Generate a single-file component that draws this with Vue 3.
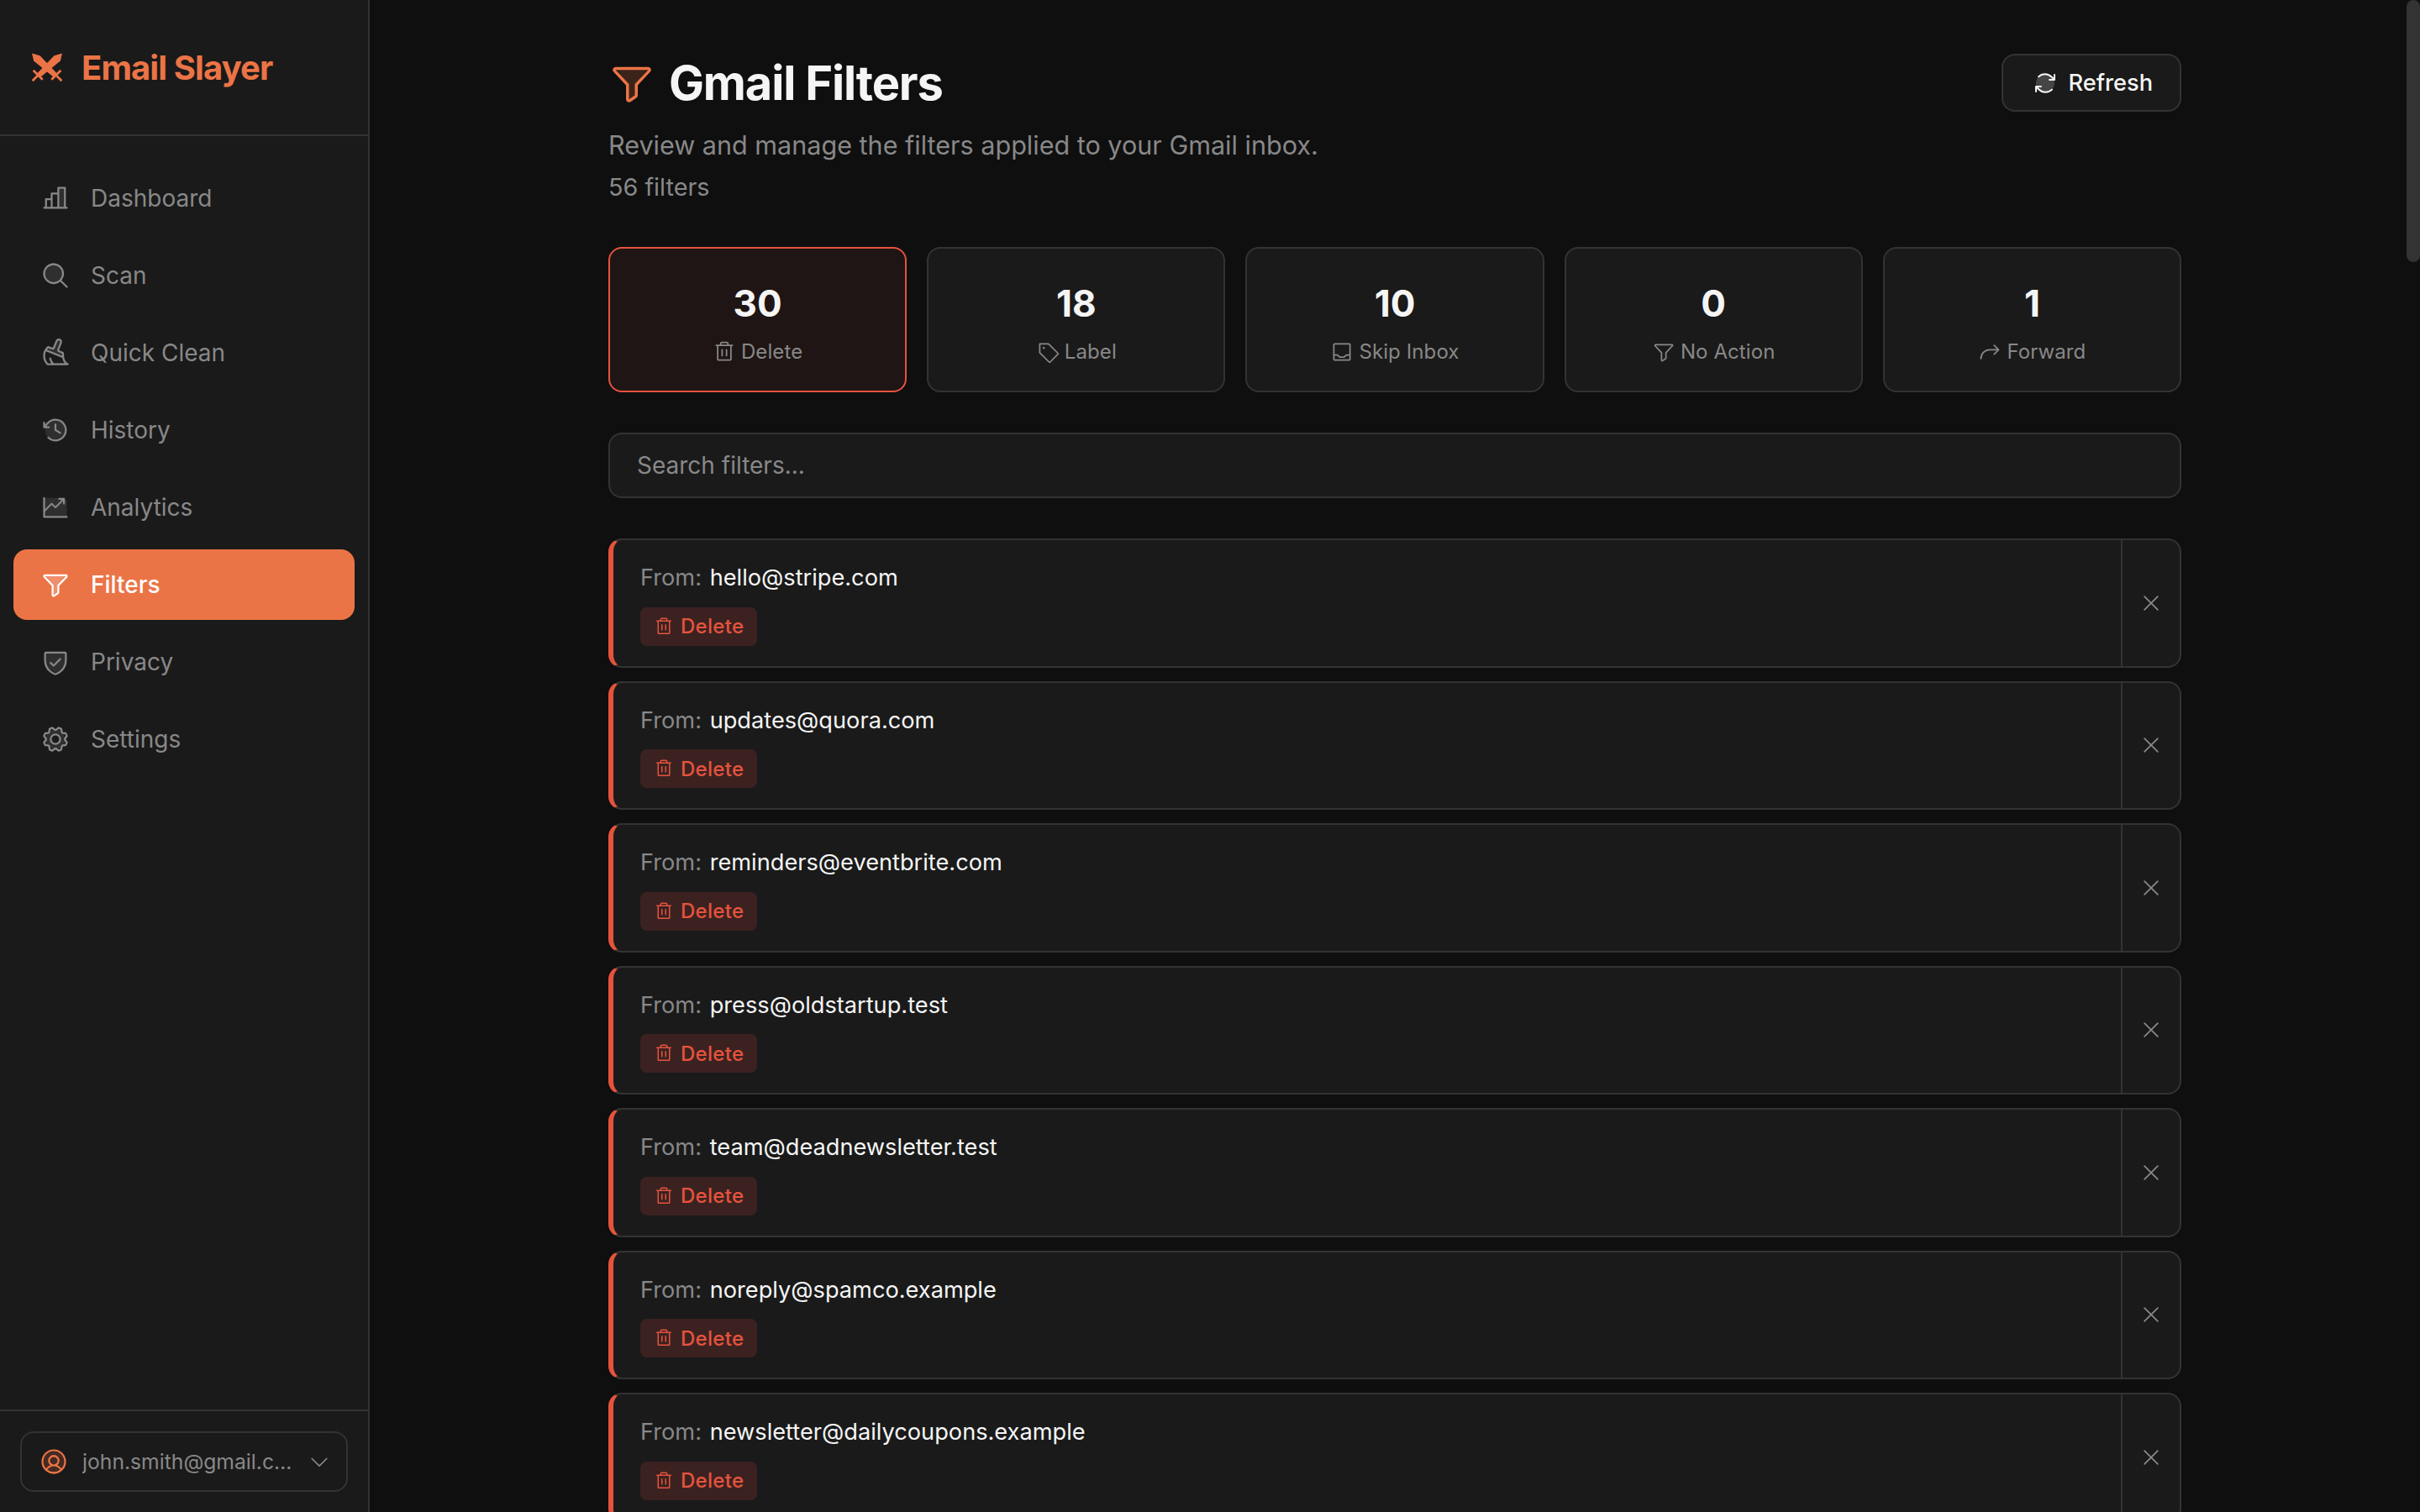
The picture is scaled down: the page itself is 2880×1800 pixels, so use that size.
<script setup>
const P = {
  chart: 'M224,200h-8V40a8,8,0,0,0-8-8H152a8,8,0,0,0-8,8V80H96a8,8,0,0,0-8,8v40H48a8,8,0,0,0-8,8v64H32a8,8,0,0,0,0,16H224a8,8,0,0,0,0-16ZM160,48h40V200H160ZM104,96h40V200H104ZM56,144H88v56H56Z',
  search: 'M229.66,218.34l-50.07-50.06a88.11,88.11,0,1,0-11.31,11.31l50.06,50.07a8,8,0,0,0,11.32-11.32ZM40,112a72,72,0,1,1,72,72A72.08,72.08,0,0,1,40,112Z',
  broom: 'M235.5,216.81c-22.56-11-35.5-34.58-35.5-64.8V134.73a15.94,15.94,0,0,0-10.09-14.87L165,110a8,8,0,0,1-4.48-10.34l21.32-53a28,28,0,0,0-16.1-37,28.14,28.14,0,0,0-35.82,16,.61.61,0,0,0,0,.12L108.9,79a8,8,0,0,1-10.37,4.49L73.11,73.14A15.89,15.89,0,0,0,55.74,76.8C34.68,98.45,24,123.75,24,152a111.45,111.45,0,0,0,31.18,77.53A8,8,0,0,0,61,232H232a8,8,0,0,0,3.5-15.19ZM67.14,88l25.41,10.3a24,24,0,0,0,31.23-13.45l21-53c2.56-6.11,9.47-9.27,15.43-7a12,12,0,0,1,6.88,15.92L145.69,93.76a24,24,0,0,0,13.43,31.14L184,134.73V152c0,.33,0,.66,0,1L55.77,101.71A108.84,108.84,0,0,1,67.14,88Zm48,128a87.53,87.53,0,0,1-24.34-42,8,8,0,0,0-15.49,4,105.16,105.16,0,0,0,18.36,38H64.44A95.54,95.54,0,0,1,40,152a85.9,85.9,0,0,1,7.73-36.29l137.8,55.12c3,18,10.56,33.48,21.89,45.16Z',
  history: 'M136,80v43.47l36.12,21.67a8,8,0,0,1-8.24,13.72l-40-24A8,8,0,0,1,120,128V80a8,8,0,0,1,16,0Zm-8-48A95.44,95.44,0,0,0,60.08,60.15C52.81,67.51,46.35,74.59,40,82V64a8,8,0,0,0-16,0v40a8,8,0,0,0,8,8H72a8,8,0,0,0,0-16H49c7.15-8.42,14.27-16.35,22.39-24.57a80,80,0,1,1,1.66,114.75,8,8,0,1,0-11,11.64A96,96,0,1,0,128,32Z',
  trend: 'M232,208a8,8,0,0,1-8,8H32a8,8,0,0,1-8-8V48a8,8,0,0,1,16,0v94.37L90.34,92a8,8,0,0,1,11.32,0L128,118.34,180.69,64H160a8,8,0,0,1,0-16h40a8,8,0,0,1,8,8V96a8,8,0,0,1-16,0V75.31L133.66,133.66a8,8,0,0,1-11.32,0L96,107.31l-56,56V200H224A8,8,0,0,1,232,208Z',
  funnel: 'M230.6,49.53A15.81,15.81,0,0,0,216,40H40A16,16,0,0,0,28.19,66.76l.08.09L96,139.17V216a16,16,0,0,0,24.87,13.32l32-21.34A16,16,0,0,0,160,194.66V139.17l67.74-72.32.08-.09A15.8,15.8,0,0,0,230.6,49.53ZM40,56h0Zm106.18,74.58A8,8,0,0,0,144,136v58.66L112,216V136a8,8,0,0,0-2.16-5.47L40,56H216Z',
  shield: 'M208,40H48A16,16,0,0,0,32,56v56c0,52.72,25.52,84.67,46.93,102.19,23.06,18.86,46,25.27,47,25.53a8,8,0,0,0,4.2,0c1-.26,23.91-6.67,47-25.53C198.48,196.67,224,164.72,224,112V56A16,16,0,0,0,208,40Zm0,72c0,37.07-13.66,67.16-40.6,89.42A129.3,129.3,0,0,1,128,223.62a128.25,128.25,0,0,1-38.92-21.81C61.82,179.51,48,149.3,48,112l0-56,160,0ZM82.34,141.66a8,8,0,0,1,11.32-11.32L112,148.69l50.34-50.35a8,8,0,0,1,11.32,11.32l-56,56a8,8,0,0,1-11.32,0Z',
  gear: 'M128,80a48,48,0,1,0,48,48A48.05,48.05,0,0,0,128,80Zm0,80a32,32,0,1,1,32-32A32,32,0,0,1,128,160Zm88-29.84q.06-2.16,0-4.32l14.92-18.64a8,8,0,0,0,1.48-7.06,107.21,107.21,0,0,0-10.88-26.25,8,8,0,0,0-6-3.93l-23.72-2.64q-1.48-1.56-3-3L186,40.54a8,8,0,0,0-3.94-6,107.71,107.71,0,0,0-26.25-10.87,8,8,0,0,0-7.06,1.49L130.16,40Q128,40,125.84,40L107.2,25.11a8,8,0,0,0-7.06-1.48A107.6,107.6,0,0,0,73.89,34.51a8,8,0,0,0-3.93,6L67.32,64.27q-1.56,1.49-3,3L40.54,70a8,8,0,0,0-6,3.94,107.71,107.71,0,0,0-10.87,26.25,8,8,0,0,0,1.49,7.06L40,125.84Q40,128,40,130.16L25.11,148.8a8,8,0,0,0-1.48,7.06,107.21,107.21,0,0,0,10.88,26.25,8,8,0,0,0,6,3.93l23.72,2.64q1.49,1.56,3,3L70,215.46a8,8,0,0,0,3.94,6,107.71,107.71,0,0,0,26.25,10.87,8,8,0,0,0,7.06-1.49L125.84,216q2.16.06,4.32,0l18.64,14.92a8,8,0,0,0,7.06,1.48,107.21,107.21,0,0,0,26.25-10.88,8,8,0,0,0,3.93-6l2.64-23.72q1.56-1.48,3-3L215.46,186a8,8,0,0,0,6-3.94,107.71,107.71,0,0,0,10.87-26.25,8,8,0,0,0-1.49-7.06Zm-16.1-6.5a73.93,73.93,0,0,1,0,8.68,8,8,0,0,0,1.74,5.48l14.19,17.73a91.57,91.57,0,0,1-6.23,15L187,173.11a8,8,0,0,0-5.1,2.64,74.11,74.11,0,0,1-6.14,6.14,8,8,0,0,0-2.64,5.1l-2.51,22.58a91.32,91.32,0,0,1-15,6.23l-17.74-14.19a8,8,0,0,0-5-1.75h-.48a73.93,73.93,0,0,1-8.68,0,8,8,0,0,0-5.48,1.74L100.45,215.8a91.57,91.57,0,0,1-15-6.23L82.89,187a8,8,0,0,0-2.64-5.1,74.11,74.11,0,0,1-6.14-6.14,8,8,0,0,0-5.1-2.64L46.43,170.6a91.32,91.32,0,0,1-6.23-15l14.19-17.74a8,8,0,0,0,1.74-5.48,73.93,73.93,0,0,1,0-8.68,8,8,0,0,0-1.74-5.48L40.2,100.45a91.57,91.57,0,0,1,6.23-15L69,82.89a8,8,0,0,0,5.1-2.64,74.11,74.11,0,0,1,6.14-6.14A8,8,0,0,0,82.89,69L85.4,46.43a91.32,91.32,0,0,1,15-6.23l17.74,14.19a8,8,0,0,0,5.48,1.74,73.93,73.93,0,0,1,8.68,0,8,8,0,0,0,5.48-1.74L155.55,40.2a91.57,91.57,0,0,1,15,6.23L173.11,69a8,8,0,0,0,2.64,5.1,74.11,74.11,0,0,1,6.14,6.14,8,8,0,0,0,5.1,2.64l22.58,2.51a91.32,91.32,0,0,1,6.23,15l-14.19,17.74A8,8,0,0,0,199.87,123.66Z',
  user: 'M128,24A104,104,0,1,0,232,128,104.11,104.11,0,0,0,128,24ZM74.08,197.5a64,64,0,0,1,107.84,0,87.83,87.83,0,0,1-107.84,0ZM96,120a32,32,0,1,1,32,32A32,32,0,0,1,96,120Zm97.76,66.41a79.66,79.66,0,0,0-36.06-28.75,48,48,0,1,0-59.4,0,79.66,79.66,0,0,0-36.06,28.75,88,88,0,1,1,131.52,0Z',
  trash: 'M216,48H176V40a24,24,0,0,0-24-24H104A24,24,0,0,0,80,40v8H40a8,8,0,0,0,0,16h8V208a16,16,0,0,0,16,16H192a16,16,0,0,0,16-16V64h8a8,8,0,0,0,0-16ZM96,40a8,8,0,0,1,8-8h48a8,8,0,0,1,8,8v8H96Zm96,168H64V64H192ZM112,104v64a8,8,0,0,1-16,0V104a8,8,0,0,1,16,0Zm48,0v64a8,8,0,0,1-16,0V104a8,8,0,0,1,16,0Z',
  tag: 'M243.31,136,144,36.69A15.86,15.86,0,0,0,132.69,32H40a8,8,0,0,0-8,8v92.69A15.86,15.86,0,0,0,36.69,144L136,243.31a16,16,0,0,0,22.63,0l84.68-84.68a16,16,0,0,0,0-22.63Zm-96,96L48,132.69V48h84.69L232,147.31ZM96,84A12,12,0,1,1,84,72,12,12,0,0,1,96,84Z',
  tray: 'M208,32H48A16,16,0,0,0,32,48V208a16,16,0,0,0,16,16H208a16,16,0,0,0,16-16V48A16,16,0,0,0,208,32Zm0,16V152h-28.7A15.86,15.86,0,0,0,168,156.69L148.69,176H107.31L88,156.69A15.86,15.86,0,0,0,76.69,152H48V48Zm0,160H48V168H76.69L96,187.31A15.86,15.86,0,0,0,107.31,192h41.38A15.86,15.86,0,0,0,160,187.31L179.31,168H208v40Z',
  share: 'M229.66,109.66l-48,48a8,8,0,0,1-11.32-11.32L204.69,112H128a88.1,88.1,0,0,0-88,88,8,8,0,0,1-16,0A104.11,104.11,0,0,1,128,96h76.69L170.34,61.66a8,8,0,0,1,11.32-11.32l48,48A8,8,0,0,1,229.66,109.66Z',
  refresh: 'M224,48V96a8,8,0,0,1-8,8H168a8,8,0,0,1,0-16h28.69L182.06,73.37a79.56,79.56,0,0,0-56.13-23.43h-.45A79.52,79.52,0,0,0,69.59,72.71,8,8,0,0,1,58.41,61.27a96,96,0,0,1,135,.79L208,76.69V48a8,8,0,0,1,16,0ZM186.41,183.29a80,80,0,0,1-112.47-.66L59.31,168H88a8,8,0,0,0,0-16H40a8,8,0,0,0-8,8v48a8,8,0,0,0,16,0V179.31l14.63,14.63A95.43,95.43,0,0,0,130,222.06h.53a95.36,95.36,0,0,0,67.07-27.33,8,8,0,0,0-11.18-11.44Z',
  caret: 'M213.66,101.66l-80,80a8,8,0,0,1-11.32,0l-80-80A8,8,0,0,1,53.66,90.34L128,164.69l74.34-74.35a8,8,0,0,1,11.32,11.32Z',
  x: 'M205.66,194.34a8,8,0,0,1-11.32,11.32L128,139.31,61.66,205.66a8,8,0,0,1-11.32-11.32L116.69,128,50.34,61.66A8,8,0,0,1,61.66,50.34L128,116.69l66.34-66.35a8,8,0,0,1,11.32,11.32L139.31,128Z'
}
const F = {
  chart: 'M152,40h56V208H152Z',
  search: 'M192,112a80,80,0,1,1-80-80A80,80,0,0,1,192,112Z',
  broom: 'M192,152c0,7,.7,13.7,2,20L48,113.5C53,102,60,91,70,81L96,92a16,16,0,0,0,21-9l0,0,21-52A20,20,0,0,1,175,47L153,96a16,16,0,0,0,9,21l30,12Z',
  history: 'M216,128A88,88,0,1,1,128,40,88,88,0,0,1,216,128Z',
  trend: 'M224,64V208H32V48H200V64Z',
  funnel: 'M40,48H216L152,128V200L104,224V128Z',
  shield: 'M216,48V112c0,84-88,104-88,104S40,196,40,112V48Z',
  gear: 'M128,40l28,8,32,14,18,30,14,36-14,36-18,30-32,14-28,8-28-8-32-14L50,164,36,128,50,92,68,62,100,48Z M128,88a40,40,0,1,0,40,40A40,40,0,0,0,128,88Z',
  user: 'M128,32A96,96,0,1,1,32,128,96,96,0,0,1,128,32Z',
  refresh: 'M216,128a88,88,0,1,1-88-88A88,88,0,0,1,216,128Z'
}
const nav = [
  { label: 'Dashboard', icon: 'chart' },
  { label: 'Scan', icon: 'search' },
  { label: 'Quick Clean', icon: 'broom' },
  { label: 'History', icon: 'history' },
  { label: 'Analytics', icon: 'trend' },
  { label: 'Filters', icon: 'funnel', active: true },
  { label: 'Privacy', icon: 'shield' },
  { label: 'Settings', icon: 'gear' }
]
const stats = [
  { n: 30, label: 'Delete', icon: 'trash', active: true },
  { n: 18, label: 'Label', icon: 'tag' },
  { n: 10, label: 'Skip Inbox', icon: 'tray' },
  { n: 0, label: 'No Action', icon: 'funnel' },
  { n: 1, label: 'Forward', icon: 'share' }
]
const rows = [
  'hello@stripe.com',
  'updates@quora.com',
  'reminders@eventbrite.com',
  'press@oldstartup.test',
  'team@deadnewsletter.test',
  'noreply@spamco.example',
  'newsletter@dailycoupons.example'
]
</script>

<template>
  <div class="app">
    <aside class="side">
      <div class="brand">
        <svg class="logo" viewBox="0 0 36 33" fill="currentColor" stroke="currentColor">
          <path stroke="none" d="M35 .5 26 3 7 23 11 27 33 9Z" />
          <path stroke="none" d="M1 .5 10 3 29 23 25 27 3 9Z" />
          <path fill="none" stroke-width="2.6" d="M2.500 19.500 13 30M7 26 1.500 31.500" />
          <path fill="none" stroke-width="2.600" d="M33.500 19.500 23 30M29 26 34.500 31.500" />
        </svg>
        <span>Email Slayer</span>
      </div>
      <nav class="nav">
        <a v-for="item in nav" :key="item.label" class="nav-item" :class="{ on: item.active }">
          <svg class="nav-icon" viewBox="0 0 256 256" fill="currentColor">
            <path :d="F[item.icon]" opacity=".2" />
            <path :d="P[item.icon]" />
          </svg>
          <span>{{ item.label }}</span>
        </a>
      </nav>
      <div class="foot">
        <div class="account">
          <svg class="acc-icon" viewBox="0 0 256 256" fill="currentColor">
            <path :d="F.user" opacity=".2" />
            <path :d="P.user" />
          </svg>
          <span class="acc-mail">john.smith@gmail.com</span>
          <svg class="caret" viewBox="0 0 256 256" fill="currentColor"><path :d="P.caret" /></svg>
        </div>
      </div>
    </aside>

    <main class="main">
      <div class="content">
        <header class="head">
          <div>
            <h1 class="title">
              <svg class="title-icon" viewBox="0 0 256 256" fill="currentColor">
                <path :d="F.funnel" opacity=".2" />
                <path :d="P.funnel" />
              </svg>
              Gmail Filters
            </h1>
            <p class="sub">Review and manage the filters applied to your Gmail inbox.</p>
            <p class="sub count">56 filters</p>
          </div>
          <button class="refresh">
            <svg class="ref-icon" viewBox="0 0 256 256" fill="currentColor">
              <path :d="F.refresh" opacity=".2" />
              <path :d="P.refresh" />
            </svg>
            Refresh
          </button>
        </header>

        <section class="stats">
          <div v-for="s in stats" :key="s.label" class="stat" :class="{ on: s.active }">
            <div class="num">{{ s.n }}</div>
            <div class="stat-label">
              <svg class="stat-icon" viewBox="0 0 256 256" fill="currentColor"><path :d="P[s.icon]" /></svg>
              {{ s.label }}
            </div>
          </div>
        </section>

        <input class="search" placeholder="Search filters..." />

        <section class="list">
          <article v-for="r in rows" :key="r" class="row">
            <div class="row-body">
              <div class="from"><span class="from-key">From:</span> {{ r }}</div>
              <span class="tag">
                <svg class="tag-icon" viewBox="0 0 256 256" fill="currentColor"><path :d="P.trash" /></svg>
                Delete
              </span>
            </div>
            <button class="del">
              <svg class="x" viewBox="0 0 256 256" fill="currentColor"><path :d="P.x" /></svg>
            </button>
          </article>
        </section>
      </div>
    </main>
    <div class="thumb"></div>
  </div>
</template>

<style>
html, body { margin: 0; height: 100%; overflow: hidden; background: #0f0f0f; }
</style>

<style scoped>
.app {
  position: relative;
  display: flex;
  height: 100vh;
  overflow: hidden;
  font-family: Inter, "Liberation Sans", sans-serif;
  background: #0f0f0f;
  color: #f5f5f5;
}
.side {
  width: 440px;
  flex: none;
  box-sizing: border-box;
  display: flex;
  flex-direction: column;
  background: #1a1a1a;
  border-right: 2px solid #333;
}
.brand {
  height: 162px;
  box-sizing: border-box;
  display: flex;
  align-items: center;
  gap: 22px;
  padding-left: 37px;
  border-bottom: 2px solid #333;
  color: #eb7446;
  font-size: 40px;
  font-weight: 700;
  letter-spacing: -0.9px;
}
.logo { width: 38px; height: 35px; flex: none; }
.nav {
  flex: 1;
  display: flex;
  flex-direction: column;
  gap: 8px;
  padding: 32px 16px;
}
.nav-item {
  height: 84px;
  display: flex;
  align-items: center;
  gap: 24px;
  padding: 0 32px;
  border-radius: 16px;
  color: #888;
  font-size: 28px;
}
.nav-item.on { background: #eb7446; color: #fff; font-weight: 500; }
.nav-icon { width: 36px; height: 36px; flex: none; }
.foot {
  height: 122px;
  box-sizing: border-box;
  padding: 24px 24px 0;
  border-top: 2px solid #333;
}
.account {
  height: 72px;
  box-sizing: border-box;
  display: flex;
  align-items: center;
  gap: 16px;
  padding: 0 18px 0 20px;
  border: 2px solid #333;
  border-radius: 16px;
  color: #888;
  font-size: 24.7px;
}
.acc-icon { width: 36px; height: 36px; flex: none; color: #eb7446; }
.acc-mail { flex: 1; min-width: 0; overflow: hidden; white-space: nowrap; text-overflow: ellipsis; }
.caret { width: 28px; height: 28px; flex: none; }
.main { flex: 1; min-width: 0; }
.content { width: 1872px; margin: 0 auto; padding-top: 64px; }
.head { display: flex; justify-content: space-between; align-items: flex-start; }
.title {
  margin: 1px 0 0;
  display: flex;
  align-items: center;
  gap: 16px;
  font-size: 56px;
  line-height: 68px;
  font-weight: 700;
  letter-spacing: -1.16px;
  color: #f5f5f5;
}
.title-icon { width: 56px; height: 56px; flex: none; color: #eb7446; }
.sub { margin: 16px 0 0; font-size: 30.56px; line-height: 48px; color: #888; }
.count { margin-top: 2px; font-size: 28.8px; }
.refresh {
  height: 69px;
  box-sizing: border-box;
  display: flex;
  align-items: center;
  gap: 12px;
  padding: 0 32px 0 34px;
  background: #1a1a1a;
  border: 2px solid #333;
  border-radius: 16px;
  color: #f5f5f5;
  font: 500 27.2px Inter, sans-serif;
}
.ref-icon { width: 32px; height: 32px; flex: none; }
.stats { display: grid; grid-template-columns: repeat(5, 1fr); gap: 24px; margin-top: 47px; }
.stat {
  height: 173px;
  box-sizing: border-box;
  display: flex;
  flex-direction: column;
  align-items: center;
  padding-top: 36px;
  background: #1a1a1a;
  border: 2px solid #333;
  border-radius: 16px;
}
.stat.on { background: #1f1514; border-color: #e5533d; }
.num { font-size: 44px; line-height: 58px; font-weight: 700; color: #f5f5f5; }
.stat-label {
  display: flex;
  align-items: center;
  gap: 6px;
  margin-top: 10px;
  font-size: 24px;
  line-height: 38px;
  letter-spacing: 0.1px;
  color: #888;
}
.stat-icon { width: 28px; height: 28px; flex: none; }
.search {
  display: block;
  width: 100%;
  height: 78px;
  box-sizing: border-box;
  margin-top: 48px;
  padding: 0 32px;
  background: #1a1a1a;
  border: 2px solid #333;
  border-radius: 16px;
  outline: none;
  font: 400 28px Inter, sans-serif;
  color: #f5f5f5;
}
.search::placeholder { color: #888; opacity: 1; }
.list { display: flex; flex-direction: column; gap: 16px; margin-top: 48px; }
.row {
  display: flex;
  height: 153.5px;
  flex: none;
  box-sizing: border-box;
  background: #1a1a1a;
  border: 2px solid #333;
  border-left: 6px solid #e5533d;
  border-radius: 16px;
}
.row-body { flex: 1; min-width: 0; padding: 25px 32px 0; }
.from { font-size: 27.2px; line-height: 40.8px; color: #f5f5f5; }
.from-key { color: #888; margin-right: 2px; }
.tag {
  display: inline-flex;
  align-items: center;
  gap: 8px;
  height: 46px;
  margin-top: 14px;
  padding: 0 16px;
  border-radius: 8px;
  background: #3b2221;
  color: #e5533d;
  font-size: 24px;
  font-weight: 500;
  letter-spacing: 0.3px;
}
.tag-icon { width: 24px; height: 24px; flex: none; }
.del {
  width: 70px;
  flex: none;
  display: flex;
  align-items: center;
  justify-content: center;
  padding: 0;
  background: none;
  border: 0;
  border-left: 2px solid #333;
  color: #888;
}
.x { width: 28px; height: 28px; }
.thumb {
  position: absolute;
  top: 0;
  right: 0;
  width: 16px;
  height: 312px;
  border-radius: 8px;
  background: #333;
}
</style>
